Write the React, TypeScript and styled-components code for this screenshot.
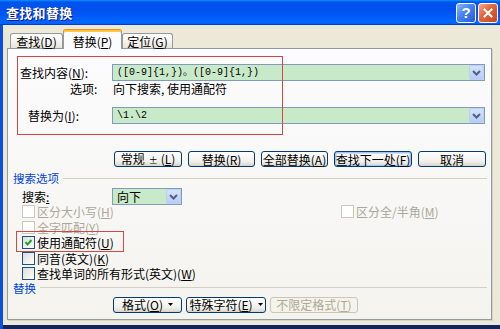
import React from "react";
import styled, { createGlobalStyle } from "styled-components";

const Global = createGlobalStyle`
  html, body { margin: 0; padding: 0; }
  body {
    width: 500px; height: 329px; overflow: hidden;
    font-family: "Noto Sans CJK SC", "Noto Sans", sans-serif;
    font-size: 12px; color: #000; background: #fff;
  }
`;

const Window = styled.div`
  width: 500px;
  height: 329px;
  display: flex;
  flex-direction: column;
  background: #0a50dc;
  overflow: hidden;
`;

const TitleBar = styled.div`
  height: 25px;
  flex: none;
  display: flex;
  align-items: center;
  padding: 0 2px 0 6px;
  background: linear-gradient(180deg, #0997ff, #0053ee 8%, #0050ee 40%, #0066ff 88%, #0066ff 93%, #005bff 95%, #003dd7 96%, #003dd7);
`;

const Title = styled.div`
  flex: 1;
  color: #fff;
  font-weight: bold;
  font-size: 13px;
  line-height: 16px;
  text-shadow: 1px 1px #0f1089;
  letter-spacing: 0.3px;
`;

const CaptionButtons = styled.div`
  display: flex;
  gap: 2px;
`;

const CaptionBtn = styled.div<{ $close?: boolean }>`
  width: 20px;
  height: 20px;
  box-sizing: border-box;
  border: 1px solid #fff;
  border-radius: 3px;
  display: flex;
  align-items: center;
  justify-content: center;
  color: #fff;
  font-family: "Liberation Sans", sans-serif;
  font-weight: bold;
  font-size: 15px;
  line-height: 1;
  background: ${(p) =>
    p.$close
      ? "linear-gradient(135deg, #f3a98e 0%, #e5683d 40%, #c8401d 100%)"
      : "linear-gradient(135deg, #8fb6ff 0%, #4a86f4 40%, #2559dc 100%)"};
`;

const Body = styled.div`
  flex: 1;
  margin-left: 3px;
  background: #ece9d8;
  border-bottom: 4px solid #14235e;
  padding: 5px 0 0 4px;
  display: flex;
  flex-direction: column;
`;

const TabStrip = styled.div`
  display: flex;
  align-items: flex-end;
  height: 19px;
  padding-left: 3px;
  margin-bottom: -1px;
  position: relative;
  z-index: 1;
`;

const Tab = styled.div<{ $active?: boolean; $w: number }>`
  width: ${(p) => p.$w}px;
  box-sizing: border-box;
  height: ${(p) => (p.$active ? 19 : 15)}px;
  margin-bottom: ${(p) => (p.$active ? 0 : 1)}px;
  border: 1px solid #919b9c;
  border-bottom: none;
  border-radius: 3px 3px 0 0;
  display: flex;
  align-items: center;
  justify-content: center;
  line-height: 13px;
  padding-top: ${(p) => (p.$active ? 1 : 0)}px;
  background: ${(p) =>
    p.$active ? "#fcfcfe" : "linear-gradient(180deg, #ffffff, #f3f2ed 60%, #e6e4da)"};
  border-top: ${(p) => (p.$active ? "2px solid #ffc83c" : "1px solid #919b9c")};
  box-shadow: ${(p) => (p.$active ? "0 -1px 0 #e68b2c" : "none")};
`;

const Panel = styled.div`
  position: relative;
  width: 485px;
  height: 272px;
  box-sizing: border-box;
  border: 1px solid #919b9c;
  background: linear-gradient(180deg, #fcfcfe, #f4f3ee);
  display: flex;
  flex-direction: column;
  box-shadow: 1px 1px 0 #d6d3c6;
`;

const RedBox = styled.div`
  position: absolute;
  left: 9px;
  top: 7px;
  width: 266px;
  height: 79px;
  box-sizing: border-box;
  border: 1px solid #d64545;
  pointer-events: none;
`;

const FieldRow = styled.div<{ $top: number; $h?: number }>`
  display: flex;
  align-items: center;
  height: ${(p) => p.$h ?? 17}px;
  margin-top: ${(p) => p.$top}px;
  line-height: 13px;
  white-space: nowrap;
`;

const FieldLabel = styled.div<{ $indent: number }>`
  width: 104px;
  flex: none;
  box-sizing: border-box;
  padding-left: ${(p) => p.$indent}px;
  white-space: nowrap;
`;

const OptionText = styled.div`
  padding-left: 1px;
`;

const Combo = styled.div<{ $w: number }>`
  width: ${(p) => p.$w}px;
  height: 17px;
  box-sizing: border-box;
  border: 1px solid #7f9db9;
  background: #c9eac9;
  display: flex;
  align-items: center;
  padding-left: 4px;
`;

const ComboText = styled.span<{ $mono?: boolean }>`
  flex: 1;
  font-family: ${(p) =>
    p.$mono ? '"Liberation Mono", "Noto Sans CJK SC", monospace' : '"Noto Sans CJK SC", sans-serif'};
  font-size: ${(p) => (p.$mono ? 10 : 12)}px;
  line-height: 15px;
  white-space: nowrap;
`;

const DropButton = styled.div`
  width: 15px;
  height: 15px;
  box-sizing: border-box;
  border: 1px solid #bccef5;
  border-radius: 2px;
  background: linear-gradient(180deg, #d6e2fc, #b9ccf6);
  display: flex;
  align-items: center;
  justify-content: center;
`;

const ButtonRow = styled.div<{ $top: number; $indent: number; $gap: number }>`
  display: flex;
  margin-top: ${(p) => p.$top}px;
  padding-left: ${(p) => p.$indent}px;
  gap: ${(p) => p.$gap}px;
`;

const Btn = styled.div<{ $w: number; $default?: boolean; $disabled?: boolean }>`
  width: ${(p) => p.$w}px;
  height: 16px;
  box-sizing: border-box;
  border: 1px solid ${(p) => (p.$disabled ? "#c9c7ba" : "#003c74")};
  border-radius: 3px;
  display: flex;
  align-items: center;
  justify-content: center;
  font-size: 12px;
  line-height: 13px;
  white-space: nowrap;
  color: ${(p) => (p.$disabled ? "#aca899" : "#000")};
  background: ${(p) =>
    p.$disabled ? "#f5f4ea" : "linear-gradient(180deg, #ffffff, #f0efea 70%, #d8d3c8)"};
  box-shadow: ${(p) => (p.$default ? "inset 0 0 0 1px #a9c4ee, inset 0 0 0 2px #cfe0fa" : "none")};
`;

const BtnLabel = styled.span`
  white-space: nowrap;
`;

const BtnArrow = styled.span`
  display: flex;
  margin-left: 5px;
`;

const Small = styled.span`
  font-size: 9px;
  margin: 0 3px 0 4px;
`;

const SectionHead = styled.div<{ $top: number }>`
  display: flex;
  align-items: center;
  gap: 4px;
  height: 12px;
  margin-top: ${(p) => p.$top}px;
  padding: 0 4px 0 5px;
  color: #0046d5;
  font-size: 11.5px;
  line-height: 12px;
  &::after {
    content: "";
    flex: 1;
    height: 1px;
    background: #d3d0c2;
  }
`;

const CheckGrid = styled.div`
  display: grid;
  grid-template-columns: 319px auto;
  grid-auto-rows: 15.5px;
  margin-top: -1px;
  padding-left: 14px;
`;

const CheckItem = styled.div<{ $disabled?: boolean; $col?: number }>`
  position: relative;
  grid-column: ${(p) => p.$col ?? 1};
  display: flex;
  align-items: center;
  gap: 2px;
  line-height: 13px;
  white-space: nowrap;
  color: ${(p) => (p.$disabled ? "#aca899" : "#000")};
`;

const Highlight = styled.div`
  position: absolute;
  left: -6px;
  top: -4px;
  width: 108px;
  height: 21px;
  box-sizing: border-box;
  border: 1px solid #d04848;
  pointer-events: none;
`;

const Box = styled.span<{ $disabled?: boolean }>`
  width: 13px;
  height: 13px;
  flex: none;
  box-sizing: border-box;
  border: 1px solid ${(p) => (p.$disabled ? "#cac8bb" : "#1c5180")};
  background: ${(p) => (p.$disabled ? "#fff" : "linear-gradient(135deg, #dcdcd7, #ffffff)")};
  display: flex;
  align-items: center;
  justify-content: center;
`;

const K = styled.span`
  text-decoration: underline;
  text-underline-offset: 1px;
`;

const Chevron = () => (
  <svg width="9" height="6" viewBox="0 0 9 6">
    <polyline points="1,1 4.5,4.5 8,1" fill="none" stroke="#4d6185" strokeWidth="2" />
  </svg>
);

const DownTri = () => (
  <svg width="5" height="3" viewBox="0 0 5 3">
    <polygon points="0,0 5,0 2.5,3" fill="#000" />
  </svg>
);

const CheckMark = () => (
  <svg width="9" height="9" viewBox="0 0 9 9">
    <polyline points="1.5,4 3.5,6.5 7.5,2" fill="none" stroke="#21a121" strokeWidth="2" />
  </svg>
);

const CloseX = () => (
  <svg width="10" height="10" viewBox="0 0 10 10">
    <path d="M1.5 1.5 L8.5 8.5 M8.5 1.5 L1.5 8.5" stroke="#fff" strokeWidth="2" strokeLinecap="square" />
  </svg>
);

const Check: React.FC<{ label: React.ReactNode; checked?: boolean; disabled?: boolean; col?: number; mark?: boolean }> = ({
  label,
  checked,
  disabled,
  col,
  mark,
}) => (
  <CheckItem $disabled={disabled} $col={col}>
    <Box $disabled={disabled}>{checked && <CheckMark />}</Box>
    <span>{label}</span>
    {mark && <Highlight />}
  </CheckItem>
);

export default function App() {
  return (
    <>
      <Global />
      <Window>
        <TitleBar>
          <Title>查找和替换</Title>
          <CaptionButtons>
            <CaptionBtn>?</CaptionBtn>
            <CaptionBtn $close>
              <CloseX />
            </CaptionBtn>
          </CaptionButtons>
        </TitleBar>
        <Body>
          <TabStrip>
            <Tab $w={53}>
              查找(<K>D</K>)
            </Tab>
            <Tab $w={59} $active>
              替换(<K>P</K>)
            </Tab>
            <Tab $w={51}>
              定位(<K>G</K>)
            </Tab>
          </TabStrip>
          <Panel>
            <RedBox />
            <FieldRow $top={15}>
              <FieldLabel $indent={12}>
                查找内容(<K>N</K>):
              </FieldLabel>
              <Combo $w={373}>
                <ComboText $mono>([0-9]{"{1,}"})。([0-9]{"{1,}"})</ComboText>
                <DropButton>
                  <Chevron />
                </DropButton>
              </Combo>
            </FieldRow>
            <FieldRow $top={1} $h={13}>
              <FieldLabel $indent={62}>选项:</FieldLabel>
              <OptionText>向下搜索, 使用通配符</OptionText>
            </FieldRow>
            <FieldRow $top={12}>
              <FieldLabel $indent={20}>
                替换为(<K>I</K>):
              </FieldLabel>
              <Combo $w={373}>
                <ComboText $mono>\1.\2</ComboText>
                <DropButton>
                  <Chevron />
                </DropButton>
              </Combo>
            </FieldRow>
            <ButtonRow $top={27} $indent={106} $gap={6}>
              <Btn $w={68}>
                <BtnLabel>
                  常规<Small>±</Small>(<K>L</K>)
                </BtnLabel>
              </Btn>
              <Btn $w={67}>
                <BtnLabel>
                  替换(<K>R</K>)
                </BtnLabel>
              </Btn>
              <Btn $w={67}>
                <BtnLabel>
                  全部替换(<K>A</K>)
                </BtnLabel>
              </Btn>
              <Btn $w={78} $default>
                <BtnLabel>
                  查找下一处(<K>F</K>)
                </BtnLabel>
              </Btn>
              <Btn $w={68}>
                <BtnLabel>取消</BtnLabel>
              </Btn>
            </ButtonRow>
            <SectionHead $top={5}>搜索选项</SectionHead>
            <FieldRow $top={4}>
              <FieldLabel $indent={14}>
                搜索<K>:</K>
              </FieldLabel>
              <Combo $w={70}>
                <ComboText>向下</ComboText>
                <DropButton>
                  <Chevron />
                </DropButton>
              </Combo>
            </FieldRow>
            <CheckGrid>
              <Check disabled label={<>区分大小写(<K>H</K>)</>} />
              <Check disabled col={2} label={<>区分全/半角(<K>M</K>)</>} />
              <Check disabled label={<>全字匹配(<K>Y</K>)</>} />
              <Check checked mark label={<>使用通配符(<K>U</K>)</>} />
              <Check label={<>同音(英文)(<K>K</K>)</>} />
              <Check label={<>查找单词的所有形式(英文)(<K>W</K>)</>} />
            </CheckGrid>
            <SectionHead $top={0}>替换</SectionHead>
            <ButtonRow $top={3} $indent={105} $gap={4}>
              <Btn $w={69}>
                <BtnLabel>
                  格式(<K>O</K>)
                </BtnLabel>
                <BtnArrow>
                  <DownTri />
                </BtnArrow>
              </Btn>
              <Btn $w={80}>
                <BtnLabel>
                  特殊字符(<K>E</K>)
                </BtnLabel>
                <BtnArrow>
                  <DownTri />
                </BtnArrow>
              </Btn>
              <Btn $w={88} $disabled>
                <BtnLabel>
                  不限定格式(<K>T</K>)
                </BtnLabel>
              </Btn>
            </ButtonRow>
          </Panel>
        </Body>
      </Window>
    </>
  );
}
